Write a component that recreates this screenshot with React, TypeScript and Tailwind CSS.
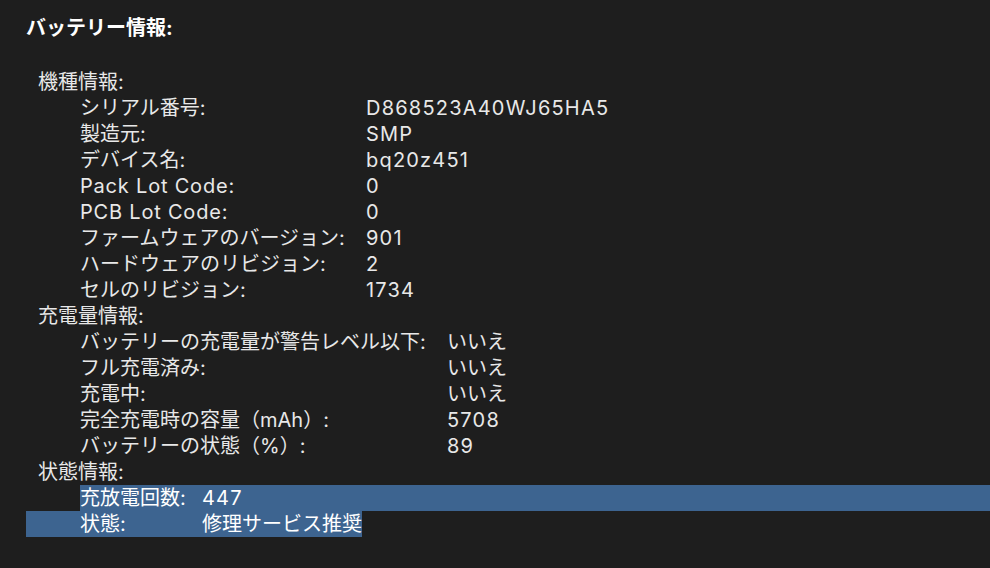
const modelInfo: [string, string][] = [
  ['シリアル番号:', 'D868523A40WJ65HA5'],
  ['製造元:', 'SMP'],
  ['デバイス名:', 'bq20z451'],
  ['Pack Lot Code:', '0'],
  ['PCB Lot Code:', '0'],
  ['ファームウェアのバージョン:', '901'],
  ['ハードウェアのリビジョン:', '2'],
  ['セルのリビジョン:', '1734'],
];

const chargeInfo: [string, string][] = [
  ['バッテリーの充電量が警告レベル以下:', 'いいえ'],
  ['フル充電済み:', 'いいえ'],
  ['充電中:', 'いいえ'],
  ['完全充電時の容量（mAh）:', '5708'],
  ['バッテリーの状態（%）:', '89'],
];

// latin text is a touch wider in the original (SF), add a bit of tracking
const isLatin = (s: string) => /^[\x20-\x7e]+$/.test(s);

function Row({ label, value, labelWidth }: { label: string; value: string; labelWidth: string }) {
  return (
    <div className="flex h-[26px] items-center pl-[54px]">
      <span className={`${labelWidth} shrink-0 whitespace-nowrap ${isLatin(label) ? 'tracking-[0.04em]' : ''}`}>
        {label}
      </span>
      <span className={`whitespace-nowrap ${isLatin(value) ? 'tracking-[0.06em]' : ''}`}>{value}</span>
    </div>
  );
}

export default function App() {
  return (
    <div
      className="min-h-[568px] w-full bg-[#1e1e1e] pl-[26px] pt-[15px] text-[20px] text-[#e8e8e8]"
      style={{ fontFamily: '"Inter", "Noto Sans CJK JP", sans-serif' }}
    >
      <div className="flex h-[26px] items-center font-bold text-white">バッテリー情報:</div>

      <div className="mt-[28px]">
        <div className="flex h-[26px] items-center pl-[12px]">機種情報:</div>
        {modelInfo.map(([label, value]) => (
          <Row key={label} label={label} value={value} labelWidth="w-[286px]" />
        ))}

        <div className="flex h-[26px] items-center pl-[12px]">充電量情報:</div>
        {chargeInfo.map(([label, value]) => (
          <Row key={label} label={label} value={value} labelWidth="w-[367px]" />
        ))}

        <div className="flex h-[26px] items-center pl-[12px]">状態情報:</div>
        <div className="ml-[54px] flex h-[26px] items-center bg-[#3d6490] text-white">
          <span className="w-[122px] shrink-0 whitespace-nowrap">充放電回数:</span>
          <span className="whitespace-nowrap tracking-[0.06em]">447</span>
        </div>
        <div className="flex h-[26px] w-fit items-center bg-[#3d6490] pl-[54px] text-white">
          <span className="w-[122px] shrink-0 whitespace-nowrap">状態:</span>
          <span className="whitespace-nowrap">修理サービス推奨</span>
        </div>
      </div>
    </div>
  );
}
